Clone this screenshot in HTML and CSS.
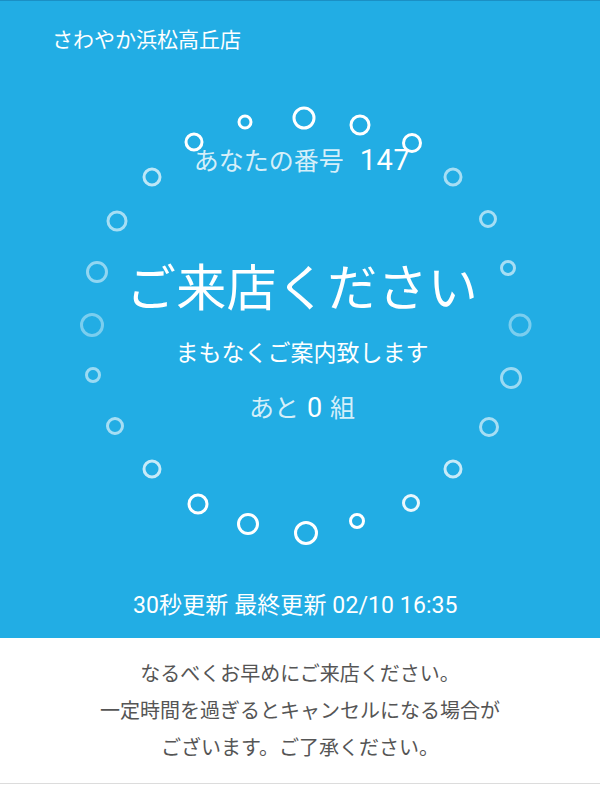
FILE: index.html
```html
<!DOCTYPE html>
<html lang="ja">
<head>
<meta charset="utf-8">
<link rel="stylesheet" href="styles.css">
</head>
<body>
<div class="page">
  <section class="hero">
    <svg class="ring" width="600" height="638" viewBox="0 0 600 638" aria-hidden="true">
      <g fill="none" stroke="#fff" stroke-width="3">
        <circle cx="304" cy="118" r="10"/>
        <circle cx="360" cy="125" r="9"/>
        <circle cx="412" cy="143" r="8.5"/>
        <circle cx="453" cy="177" r="8" opacity="0.6"/>
        <circle cx="488" cy="219" r="7.5" opacity="0.6"/>
        <circle cx="508" cy="268" r="6.5" opacity="0.6"/>
        <circle cx="520" cy="325" r="10" opacity="0.4"/>
        <circle cx="511" cy="378" r="9.5" opacity="0.55"/>
        <circle cx="489" cy="427" r="8.5" opacity="0.6"/>
        <circle cx="453" cy="469" r="8" opacity="0.75"/>
        <circle cx="411" cy="503" r="7.5" opacity="0.9"/>
        <circle cx="357" cy="521" r="6.5"/>
        <circle cx="306" cy="533" r="10.5"/>
        <circle cx="248" cy="524" r="9.5"/>
        <circle cx="198" cy="504" r="9"/>
        <circle cx="152" cy="469" r="8" opacity="0.75"/>
        <circle cx="115" cy="426" r="7.5" opacity="0.6"/>
        <circle cx="93" cy="375" r="6.5" opacity="0.55"/>
        <circle cx="92" cy="325" r="10.5" opacity="0.4"/>
        <circle cx="97" cy="272" r="9.5" opacity="0.5"/>
        <circle cx="117" cy="221" r="9" opacity="0.6"/>
        <circle cx="152" cy="177" r="8" opacity="0.7"/>
        <circle cx="194" cy="142" r="8"/>
        <circle cx="245" cy="122" r="6"/>
      </g>
    </svg>
    <header class="shop">さわやか浜松高丘店</header>
    <div class="stage">
      <div class="number"><span class="label">あなたの番号</span><span class="num">147</span></div>
      <h1 class="title">ご来店ください</h1>
      <p class="sub">まもなくご案内致します</p>
      <p class="remain"><span class="faint">あと</span><span class="count">0</span><span class="faint">組</span></p>
    </div>
    <p class="update">30秒更新 最終更新 02/10 16:35</p>
  </section>
  <section class="note">
    <p>なるべくお早めにご来店ください。</p>
    <p>一定時間を過ぎるとキャンセルになる場合が</p>
    <p>ございます。ご了承ください。</p>
  </section>
</div>
</body>
</html>
```

FILE: styles.css
```css
* { box-sizing: border-box; }
html, body { margin: 0; padding: 0; background: #fff; }
body {
  font-family: Roboto, "Noto Sans CJK JP", sans-serif;
  width: 600px;
  height: 800px;
  overflow: hidden;
}
.page { width: 600px; }
.hero {
  position: relative;
  height: 638px;
  background: #22ade4;
  border-top: 1px solid #1b8fc4;
  color: #fff;
}
.ring { position: absolute; left: 0; top: -1px; }
.shop {
  position: relative;
  height: 79px;
  padding: 25px 0 0 52px;
  font-size: 21px;
  line-height: 28px;
}
.stage {
  position: relative;
  display: flex;
  flex-direction: column;
  align-items: center;
  padding-left: 4px;
}
.number {
  margin-top: 62px;
  line-height: 36px;
  display: flex;
  align-items: baseline;
}
.label {
  font-size: 25px;
  color: rgba(255,255,255,0.82);
}
.num {
  font-size: 29px;
  margin-left: 16px;
  letter-spacing: 0.5px;
}
.title {
  margin: 79px 0 0;
  font-size: 50px;
  font-weight: 400;
  line-height: 60px;
  letter-spacing: 0.3px;
}
.sub {
  margin: 19px 0 0;
  font-size: 23px;
  line-height: 32px;
}
.remain {
  margin: 20px 0 0;
  font-size: 25px;
  line-height: 36px;
  display: flex;
  align-items: baseline;
}
.faint { color: rgba(255,255,255,0.82); }
.count { font-size: 27px; margin: 0 8px; }
.update {
  position: absolute;
  left: 0;
  right: 0;
  top: 590px;
  margin: 0;
  font-size: 23px;
  line-height: 30px;
  text-align: left;
  padding-left: 133px;
  letter-spacing: 0.1px;
}
.note {
  height: 146px;
  border-bottom: 1px solid #dcdcdc;
  padding-top: 18px;
  text-align: center;
  color: #555;
  font-size: 20px;
  line-height: 37px;
}
.note p { margin: 0; }
```
